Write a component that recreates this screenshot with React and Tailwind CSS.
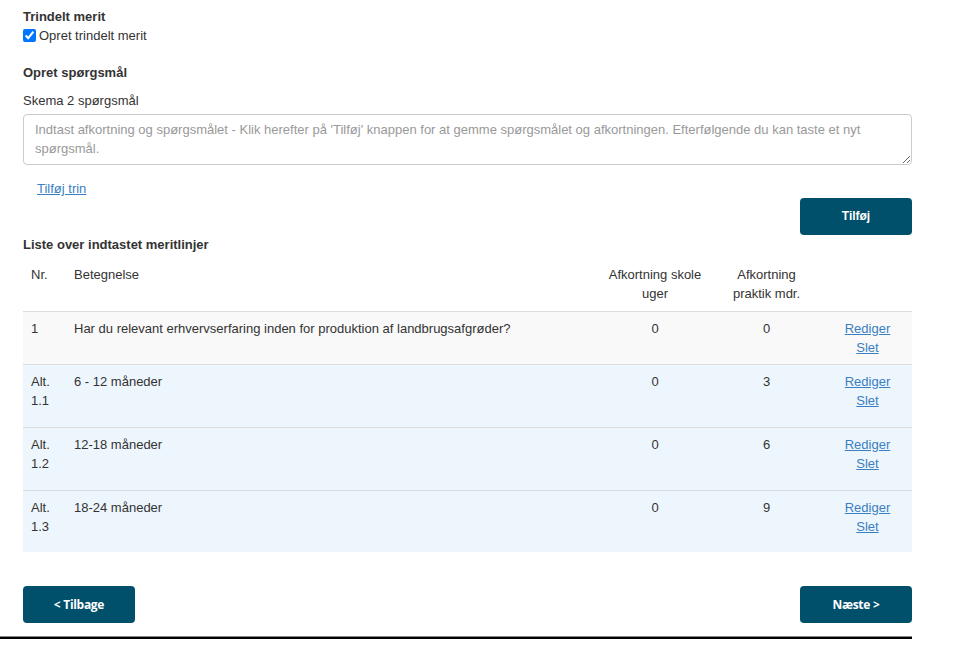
const rows = [
  { nr: "1", text: "Har du relevant erhvervserfaring inden for produktion af landbrugsafgrøder?", skole: "0", praktik: "0", bg: "bg-[#f9f9f9]", h: "h-[53px]" },
  { nr: "Alt. 1.1", text: "6 - 12 måneder", skole: "0", praktik: "3", bg: "bg-[#eef6fd]", h: "h-[63px]" },
  { nr: "Alt. 1.2", text: "12-18 måneder", skole: "0", praktik: "6", bg: "bg-[#eef6fd]", h: "h-[63px]" },
  { nr: "Alt. 1.3", text: "18-24 måneder", skole: "0", praktik: "9", bg: "bg-[#eef6fd]", h: "h-[62px]" },
];

function NavButton({ children }) {
  return (
    <button className="w-[112px] h-[37px] rounded-[4px] bg-[#004f6b] text-white text-[12px] font-bold font-['Open_Sans',sans-serif] tracking-[-0.3px]">
      {children}
    </button>
  );
}

export default function App() {
  return (
    <div className="min-h-screen bg-white font-['Liberation_Sans',Arial,sans-serif] text-[13px] leading-[19px] text-[#333]">
      <div className="w-[912px] pl-[23px] pt-[7px]">
        <div className="font-bold">Trindelt merit</div>
        <label className="flex items-center gap-[3px]">
          <input type="checkbox" checked readOnly className="m-0 w-[13px] h-[13px] accent-[#0075ff]" />
          <span>Opret trindelt merit</span>
        </label>

        <div className="font-bold mt-[18px]">Opret spørgsmål</div>
        <div className="mt-[9px]">Skema 2 spørgsmål</div>
        <textarea
          rows={2}
          placeholder="Indtast afkortning og spørgsmålet - Klik herefter på 'Tilføj' knappen for at gemme spørgsmålet og afkortningen. Efterfølgende du kan taste et nyt spørgsmål."
          className="block mt-[4px] w-full h-[51px] border border-[#ccc] rounded-[4px] px-[11px] py-[5px] placeholder:text-[#999] text-[13px] leading-[19px]"
        />

        <div className="mt-[14px] pl-[14px]">
          <a href="#" className="text-[#3a7fc1] underline">Tilføj trin</a>
        </div>
        <div className="flex justify-end">
          <button className="w-[112px] h-[37px] rounded-[4px] bg-[#004f6b] text-white text-[12px] font-bold">Tilføj</button>
        </div>

        <div className="font-bold">Liste over indtastet meritlinjer</div>

        <table className="w-full table-fixed border-collapse mt-[6px]">
          <colgroup>
            <col className="w-[43px]" />
            <col />
            <col className="w-[110px]" />
            <col className="w-[113px]" />
            <col className="w-[89px]" />
          </colgroup>
          <thead>
            <tr className="h-[51px] border-b border-[#ddd] align-top">
              <th className="font-normal text-left px-[8px] pt-[5px]">Nr.</th>
              <th className="font-normal text-left px-[8px] pt-[5px]">Betegnelse</th>
              <th className="font-normal text-center px-[4px] pt-[5px]">Afkortning skole uger</th>
              <th className="font-normal text-center px-[8px] pt-[5px]">Afkortning praktik mdr.</th>
              <th></th>
            </tr>
          </thead>
          <tbody>
            {rows.map((r) => (
              <tr key={r.nr} className={`${r.bg} ${r.h} border-b border-[#ddd] align-top last:border-b-0`}>
                <td className="px-[8px] pt-[7px]">{r.nr}</td>
                <td className="px-[8px] pt-[7px]">{r.text}</td>
                <td className="text-center pt-[7px]">{r.skole}</td>
                <td className="text-center pt-[7px]">{r.praktik}</td>
                <td className="text-center pt-[7px]">
                  <a href="#" className="text-[#3a7fc1] underline">Rediger</a>
                  <br />
                  <a href="#" className="text-[#3a7fc1] underline">Slet</a>
                </td>
              </tr>
            ))}
          </tbody>
        </table>

        <div className="flex justify-between mt-[34px]">
          <NavButton>&lt; Tilbage</NavButton>
          <NavButton>Næste &gt;</NavButton>
        </div>
      </div>
      <div className="w-[912px] mt-[13px] border-t border-[#888] h-[3px] bg-black"></div>
    </div>
  );
}
